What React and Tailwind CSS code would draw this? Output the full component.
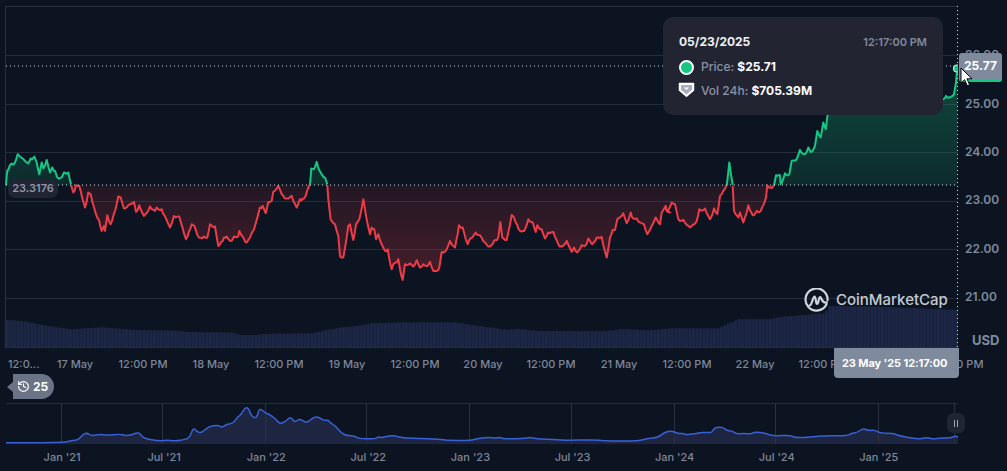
import { History } from 'lucide-react'

// reference points were read off 3x crops, so convert them back to page coords
const at = (ox, oy, pts) => pts.map(([x, y]) => [ox + x / 3, oy + y / 3])
const str = (pts) => pts.map(([x, y]) => `${x.toFixed(1)},${y.toFixed(1)}`).join(' ')
const BASE = 185

// the price line is noisy between the points that were read off, so add small fixed wiggles
function rough(pts) {
  const out = [pts[0]]
  for (let i = 1; i < pts.length; i++) {
    const [x0, y0] = pts[i - 1]
    const [x1, y1] = pts[i]
    const n = Math.max(1, Math.round(Math.abs(x1 - x0) / 1.6))
    for (let k = 1; k <= n; k++) {
      const x = x0 + ((x1 - x0) * k) / n
      const y = y0 + ((y1 - y0) * k) / n
      const wiggle = k === n ? 0 : Math.sin(x * 12.9898) * 43758.5453
      out.push([x, y + (wiggle - Math.floor(wiggle) - 0.5) * 1.6])
    }
  }
  return out
}

const greenA = at(0, 130, [[18,165],[20,140],[22,125],[30,107],[35,103],[45,100],[53,75],[60,82],[68,88],[75,95],[85,103],[92,88],[97,90],[103,82],[110,100],[118,135],[125,100],[130,118],[140,92],[150,130],[157,115],[165,125],[172,145],[185,145],[192,130],[205,130],[213,165]])
const redA = at(0, 130, [[213,165],[220,190],[228,168],[238,170],[255,235],[265,190],[272,195],[288,255],[297,272],[305,305],[312,290],[315,305],[322,258],[332,285],[350,225],[355,202],[362,205],[372,238],[385,228],[402,218],[408,248],[418,228],[432,260],[450,232],[465,245],[470,235],[485,240],[498,268],[510,295],[522,260],[538,262],[558,330],[575,285],[583,290],[597,325],[612,322],[622,325],[630,285],[645,292],[655,350],[672,325],[680,322],[695,335],[702,322],[715,320],[718,305],[740,340],[755,312],[762,300],[780,235],[788,230],[797,252],[805,218],[815,215],[820,188],[835,170],[850,200],[862,208],[875,200],[890,235],[900,210],[912,208],[925,175],[930,165]])
const greenB = at(0, 130, [[930,165],[934,118],[942,120],[950,98],[962,130],[975,145],[982,165]])
const redB = [
  ...at(0, 130, [[982,165],[985,210],[992,272],[1005,285],[1015,320],[1020,380]]),
  ...at(340, 170, [[3,265],[10,265],[25,170],[30,165],[40,212],[48,165],[58,150],[70,90],[82,160],[90,195],[95,175],[103,180],[108,210],[115,195],[130,235],[135,245],[143,240],[155,300],[160,285],[175,270],[180,300],[188,332],[195,285],[210,282],[220,292],[230,273],[240,295],[250,285],[258,290],[270,278],[280,305],[290,305],[298,295],[305,248],[320,240],[330,215],[345,235],[357,168],[368,175],[383,225],[388,212],[407,190],[420,198],[435,220],[450,232],[462,215],[475,205],[481,158],[487,205],[500,212],[515,137],[522,145],[540,185],[553,185],[565,150],[578,160],[587,188],[592,168],[605,180],[615,208],[625,190],[640,188],[655,225],[667,232],[680,215],[695,248],[702,235],[712,250],[725,228],[735,230],[745,208],[757,225],[770,205],[785,203],[800,265],[810,205],[818,182],[825,182],[832,150],[850,132],[860,162],[872,130],[880,148],[890,148],[912,165],[922,195],[935,170],[947,145],[960,165],[965,130],[977,110],[980,125],[990,130]]),
  ...at(660, 90, [[15,355],[22,365],[35,340],[45,345],[55,390],[70,392],[90,415],[110,395],[118,360],[135,358],[150,390],[162,358],[172,375],[180,320],[200,287]]),
]
const greenC = at(660, 90, [[200,287],[208,220],[218,287]])
const redC = at(660, 90, [[218,287],[222,365],[235,385],[240,370],[250,400],[265,348],[278,378],[290,365],[302,365],[318,325],[322,288],[335,297],[342,287]])
const greenD = [
  ...at(660, 90, [[342,287],[348,258],[360,258],[362,285],[375,252],[388,255],[395,215],[410,210],[420,182],[435,195],[445,175],[452,188],[465,170],[472,125],[482,145],[490,100],[497,120],[503,75]]),
  [832, 96], [880, 88], [930, 92],
  ...at(650, 0, [[880,300],[888,290],[900,295],[912,285],[918,250],[922,205]]),
]

const reds = [redA, redB, redC].map(rough)
const greens = [greenA, greenB, greenC, greenD].map(rough)
const area = (pts) => `${pts[0][0]},${BASE} ${str(pts)} ${pts[pts.length - 1][0]},${BASE}`

const volume = [
  ...at(0, 310, [[18,30],[70,35],[140,48],[210,58],[300,52],[400,60],[520,62],[560,66],[690,68],[720,75],[770,75],[780,72],[930,70],[985,58]]),
  ...at(330, 300, [[0,88],[30,82],[80,78],[120,70],[180,68],[370,67],[440,78],[530,90],[560,87],[620,93],[820,94],[870,87],[950,91],[1020,85],[1110,85]]),
  ...at(700, 270, [[0,175],[50,175],[110,148],[200,148],[250,140],[370,130],[385,108],[520,110],[570,112],[640,115],[770,120]]),
]

function volumeAt(x) {
  for (let i = 1; i < volume.length; i++) {
    if (x <= volume[i][0]) {
      const [x0, y0] = volume[i - 1]
      const [x1, y1] = volume[i]
      return y0 + ((y1 - y0) * (x - x0)) / (x1 - x0)
    }
  }
  return volume[volume.length - 1][1]
}

const bars = []
for (let x = 6; x < 957; x += 3.5) bars.push(x)

const mini = [
  ...at(0, 310, [[18,398],[185,399],[215,392],[235,390],[250,372],[262,369],[275,378],[300,372],[320,376],[360,372],[375,377],[395,375],[410,368],[420,370],[430,385],[480,393],[500,390],[525,393],[560,388],[570,380],[580,352],[592,367],[605,368],[625,350],[655,345],[665,353],[680,342],[700,340],[712,322],[722,315],[735,293],[745,293],[755,320],[770,325],[778,293],[795,308],[810,315],[825,325],[840,342],[855,335],[872,320],[885,338],[898,325],[920,340],[940,322],[955,320],[970,332],[985,330]]),
  ...at(330, 395, [[0,83],[15,92],[35,115],[50,122],[75,123],[85,131],[135,132],[145,125],[155,129],[178,122],[195,122],[220,130],[320,131],[345,136],[420,137],[445,130],[480,127],[495,130],[510,127],[525,132],[590,130],[600,127],[615,131],[690,134],[700,136],[800,134],[815,137],[920,139],[950,131],[985,127],[1003,112],[1025,107],[1045,116],[1060,115],[1072,120],[1085,116],[1100,116],[1110,112],[1140,113]]),
  ...at(700, 270, [[35,487],[45,472],[70,472],[80,482],[95,482],[110,492],[130,490],[155,492],[165,485],[195,490],[220,498],[270,495],[290,505],[370,497],[440,498],[455,490],[470,488],[490,475],[505,482],[525,480],[540,490],[580,490],[600,498],[660,508],[680,502],[700,508],[720,503],[750,505],[765,497],[775,502]]),
]

// rounds the corners of the overview line
function smooth(pts) {
  let d = `M${pts[0][0].toFixed(1)} ${pts[0][1].toFixed(1)}`
  for (let i = 1; i < pts.length - 1; i++) {
    const mx = (pts[i][0] + pts[i + 1][0]) / 2
    const my = (pts[i][1] + pts[i + 1][1]) / 2
    d += ` Q${pts[i][0].toFixed(1)} ${pts[i][1].toFixed(1)} ${mx.toFixed(1)} ${my.toFixed(1)}`
  }
  const last = pts[pts.length - 1]
  return `${d} L${last[0].toFixed(1)} ${last[1].toFixed(1)}`
}

const gridY = [55.5, 104.5, 152.5, 201.5, 249.5, 298.5]
const yLabels = ['26.00', '25.00', '24.00', '23.00', '22.00', '21.00']
const xLabels = ['17 May', '12:00 PM', '18 May', '12:00 PM', '19 May', '12:00 PM', '20 May', '12:00 PM', '21 May', '12:00 PM', '22 May', '12:00 PM', '23 May', '12:00 PM']
const miniTicks = [61.5, 162.5, 265.5, 366.5, 469.5, 571.5, 674.5, 775.5, 878.5, 954.5]
const miniLabels = ["Jan '21", "Jul '21", "Jan '22", "Jul '22", "Jan '23", "Jul '23", "Jan '24", "Jul '24", "Jan '25"]

function PriceChart() {
  return (
    <svg width="958" height="342" viewBox="0 6 958 342" className="block shrink-0">
      <defs>
        <linearGradient id="greenFill" gradientUnits="userSpaceOnUse" x1="0" y1="60" x2="0" y2="185">
          <stop offset="0" stopColor="#16c784" stopOpacity="0.3" />
          <stop offset="1" stopColor="#16c784" stopOpacity="0.13" />
        </linearGradient>
        <linearGradient id="redFill" gradientUnits="userSpaceOnUse" x1="0" y1="185" x2="0" y2="285">
          <stop offset="0" stopColor="#ea3943" stopOpacity="0.1" />
          <stop offset="1" stopColor="#ea3943" stopOpacity="0.27" />
        </linearGradient>
      </defs>

      <line x1="5.5" y1="6" x2="5.5" y2="348" stroke="#2a3040" />
      <line x1="6" y1="6.5" x2="958" y2="6.5" stroke="#2a3040" />
      {gridY.map((y) => (
        <line key={y} x1="6" y1={y} x2="958" y2={y} stroke="#262c3a" />
      ))}

      {greens.map((p, i) => <polygon key={i} points={area(p)} fill="url(#greenFill)" />)}
      {reds.map((p, i) => <polygon key={i} points={area(p)} fill="url(#redFill)" />)}

      {bars.map((x) => {
        const top = volumeAt(x)
        return (
          <g key={x}>
            <rect x={x} y={top} width="3.5" height={348 - top} fill="#19213a" />
            <rect x={x} y={top} width="2.8" height={348 - top} fill="#1d2644" />
          </g>
        )
      })}
      <line x1="6" y1="348" x2="958" y2="348" stroke="#2a3350" />

      {greens.map((p, i) => (
        <polyline key={i} points={str(p)} fill="none" stroke="#16c784" strokeWidth="2" strokeLinejoin="round" />
      ))}
      {reds.map((p, i) => (
        <polyline key={i} points={str(p)} fill="none" stroke="#ed3b48" strokeWidth="2" strokeLinejoin="round" />
      ))}

      <line x1="6" y1="185" x2="958" y2="185" stroke="#d5dae3" strokeDasharray="1 3" />
      <line x1="6" y1="66" x2="958" y2="66" stroke="#d5dae3" strokeDasharray="1 3" />
      <line x1="957.5" y1="6" x2="957.5" y2="348" stroke="#d5dae3" strokeDasharray="1 3" />
      <circle cx="957" cy="68.5" r="3.5" fill="#16c784" stroke="#b9ecd8" strokeWidth="1.2" />
    </svg>
  )
}

function MiniChart() {
  const line = smooth(mini)
  return (
    <svg width="958" height="42" viewBox="0 403 958 42" className="block">
      <line x1="6" y1="403.5" x2="958" y2="403.5" stroke="#262c3a" />
      <path d={`${line} L958 444 L6 444 Z`} fill="#1d2540" />
      {miniTicks.map((x) => (
        <line key={x} x1={x} y1="403" x2={x} y2="444" stroke="#2a3040" />
      ))}
      <path d={line} fill="none" stroke="#3861d8" strokeWidth="1.5" />
    </svg>
  )
}

function VolumeIcon() {
  return (
    <svg width="17" height="16" viewBox="0 0 17 16">
      <path d="M1.500 1.500h14v6.800l-7 6-7-6z" fill="#fff" stroke="#fff" strokeWidth="1.500" strokeLinejoin="round" />
      <path d="M3 3h11v4.800l-5.500 4.600L3 7.800z" fill="#a6adbe" />
      <path d="M6 5.500h5L8.500 8z" fill="#fff" />
    </svg>
  )
}

function Logo() {
  return (
    <svg width="25" height="25" viewBox="0 0 25 25" fill="none" stroke="#d0d4dc" strokeWidth="2.2" strokeLinecap="round" strokeLinejoin="round">
      <path d="M22.6 16A11 11 0 1 1 23.5 12.5" />
      <path d="M5.500 17.500c2.500 0 3.300-9 5-9s1 7.500 2.600 7.500 1.400-7 3-7 1.200 6.500 6.700 5.500" />
    </svg>
  )
}

export default function App() {
  return (
    <div className="relative h-[471px] w-[1007px] overflow-hidden bg-[#0c1421] pt-[6px] font-['Inter',sans-serif]">
      <div className="flex h-[342px]">
        <PriceChart />
        <div className="flex w-[49px] flex-col pt-[25px] pl-[7px] text-[12px] font-semibold text-[#7f8a9d]">
          {yLabels.map((label) => (
            <div key={label} className="flex h-[48.4px] items-center">{label}</div>
          ))}
          <div className="mt-auto pl-[7px] text-[13px] leading-4 font-bold">USD</div>
        </div>
      </div>

      <div className="flex pt-[8px] text-[11px] leading-4 font-medium whitespace-nowrap text-[#7e8799]">
        <div className="w-[41px] pl-[8px]">12:0...</div>
        {xLabels.map((label, i) => (
          <div key={i} className="flex w-[68px] shrink-0 justify-center">{label}</div>
        ))}
      </div>

      <div className="mt-[2px] flex h-[25px] items-center pl-[7px]">
        <div className="h-0 w-0 border-y-[5px] border-r-[6px] border-y-transparent border-r-[#6b7386]" />
        <div className="flex h-[25px] items-center gap-[3px] rounded-l-[10px] rounded-r-full bg-[#6b7386] pr-[6px] pl-[4px] text-[12px] font-bold text-white">
          <History size={13} strokeWidth={2.2} />
          <span>25</span>
        </div>
      </div>

      <div className="pt-[4px]">
        <MiniChart />
      </div>
      <div className="flex pt-[4px] pl-[11px] text-[11px] leading-4 font-medium whitespace-nowrap text-[#7e8799]">
        {miniLabels.map((label) => (
          <div key={label} className="w-[102.1px] shrink-0 text-center">{label}</div>
        ))}
      </div>

      {/* hover tooltip */}
      <div className="absolute top-[17px] left-[663px] flex h-[98px] w-[280px] flex-col rounded-[10px] bg-[#222531] px-[16px] pt-[16px] text-[12px]">
        <div className="flex h-[18px] items-center justify-between">
          <span className="font-bold text-[#eff2f5]">05/23/2025</span>
          <span className="text-[11px] font-semibold text-[#808a9d]">12:17:00 PM</span>
        </div>
        <div className="mt-[7px] flex h-[18px] items-center gap-[7px]">
          <span className="h-[15px] w-[15px] rounded-full border-2 border-white bg-[#16c784]" />
          <span className="font-medium text-[#8c93a6]">Price: <span className="font-bold text-white">$25.71</span></span>
        </div>
        <div className="mt-[6px] flex h-[18px] items-center gap-[6px]">
          <span className="-mt-[2px] -ml-[1px]"><VolumeIcon /></span>
          <span className="font-medium text-[#8c93a6]">Vol 24h: <span className="font-bold text-white">$705.39M</span></span>
        </div>
      </div>

      {/* price tag + cursor */}
      <div className="absolute top-[53px] left-[959px] flex h-[29px] w-[43px] items-center justify-center rounded-[3px] border-b-[3px] border-[#16c784] bg-[#808a9d] text-[12px] font-bold text-white">
        25.77
      </div>
      <svg width="14" height="20" viewBox="0 0 14 20" className="absolute top-[67px] left-[960px]">
        <path d="M1 1v15l3.600-3.300 2.600 6 2.400-1-2.600-5.900h5z" fill="#fff" stroke="#000" strokeWidth="1" />
      </svg>

      {/* reference price badge */}
      <div className="absolute top-[179px] left-[8px] flex h-[19px] w-[50px] items-center justify-center rounded-[7px] bg-[#1f2533] text-[11px] font-semibold text-[#8f97a8]">
        23.3176
      </div>

      {/* watermark */}
      <div className="absolute top-[288px] left-[804px] flex items-center gap-[7px] text-[15px] font-medium text-[#c6cad3]">
        <Logo />
        <span>CoinMarketCap</span>
      </div>

      {/* crosshair time tag */}
      <div className="absolute top-[348px] left-[834px] flex h-[30px] w-[125px] items-center rounded-b-[4px] bg-[#808a9d] pl-[8px] text-[11px] font-bold tracking-[-0.1px] whitespace-nowrap text-white">
        23 May '25 12:17:00
      </div>

      {/* range slider handle */}
      <div className="absolute top-[413px] left-[947px] flex h-[20px] w-[18px] items-center justify-center gap-[2px] rounded-[6px] bg-[#1e2533]">
        <span className="h-[7px] w-[1px] bg-[#a1a7b5]" />
        <span className="h-[7px] w-[1px] bg-[#a1a7b5]" />
      </div>
    </div>
  )
}
